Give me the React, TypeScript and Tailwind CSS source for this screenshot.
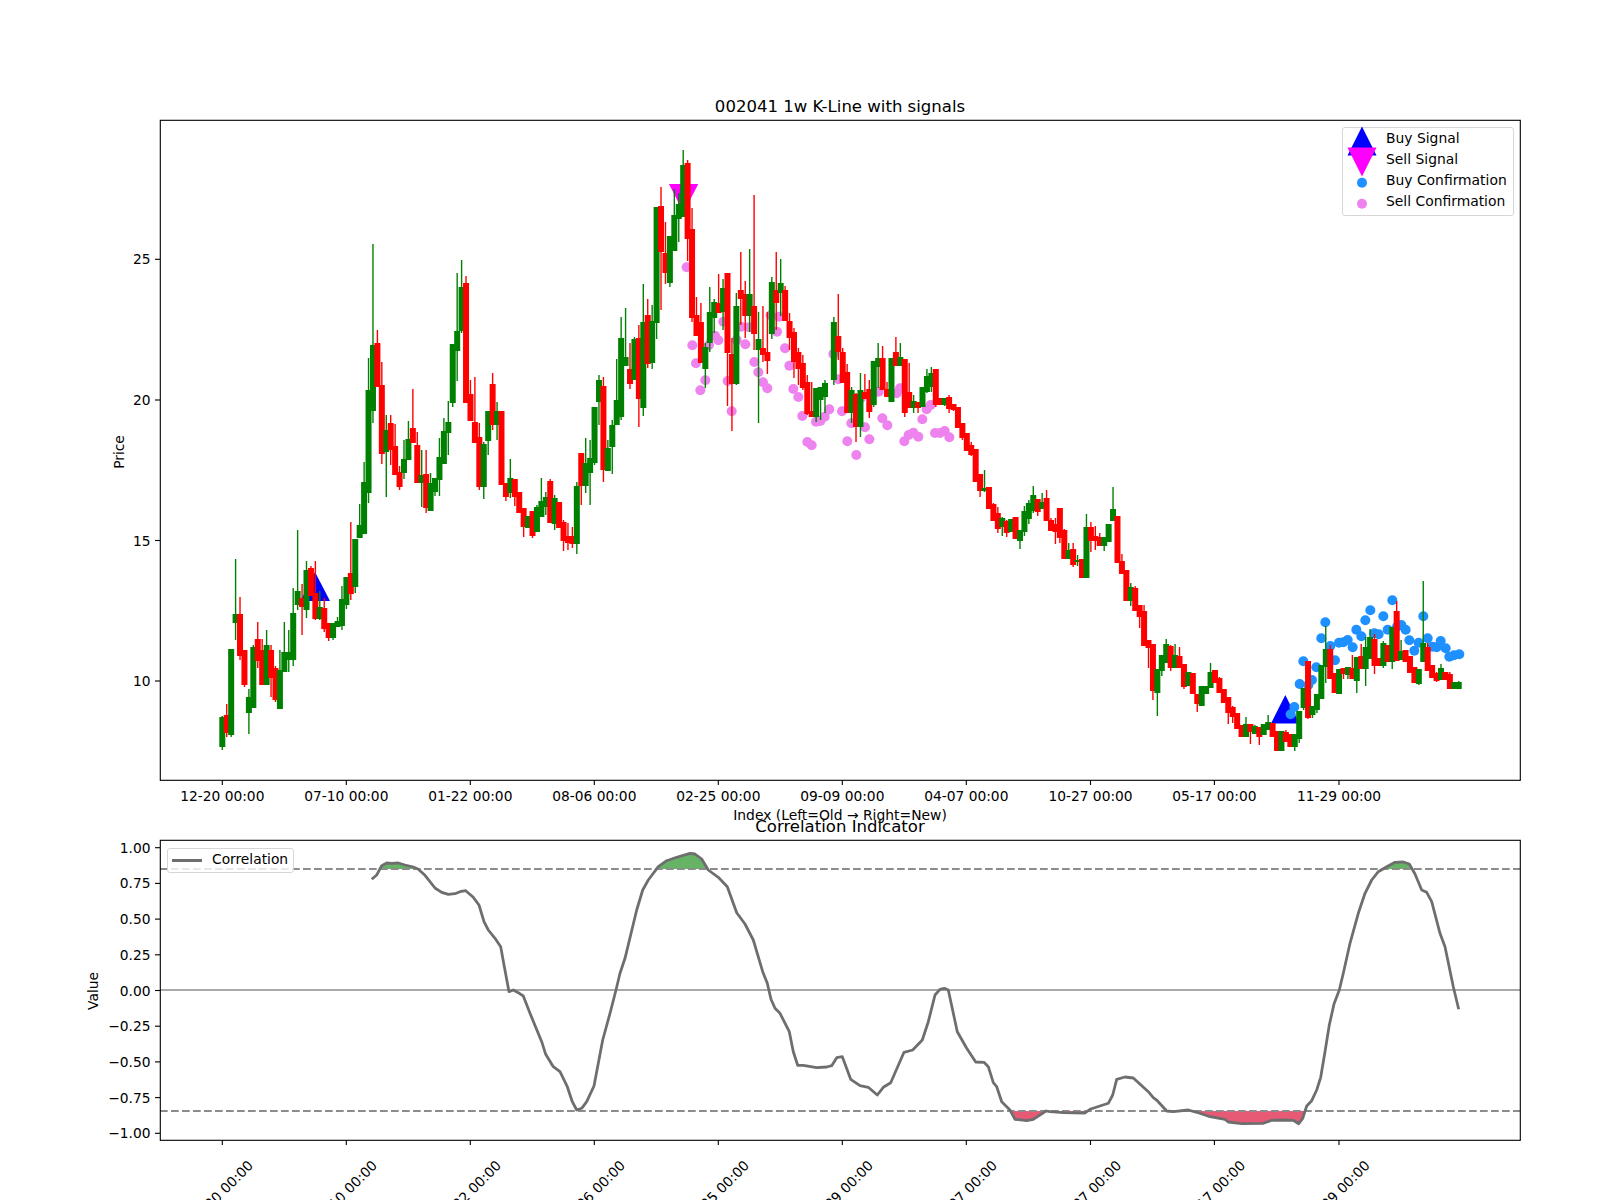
type Pt = [number, number];

// g/r, wick top, body top, body bottom, wick bottom (page px)
const candles: [string, number, number, number, number][] = [
  ["g",716,717,747,750],["r",704,715,733,737],["g",649,649,735,737],["g",559,614,623,640],["r",597,614,656,660],
  ["r",650,650,685,687],["g",689,697,713,734],["g",645,647,708,708],["r",622,639,661,668],["r",639,650,685,685],
  ["g",630,645,685,685],["r",645,650,678,697],["r",666,668,700,702],["g",650,670,709,709],["g",622,652,672,672],
  ["g",630,652,660,672],["g",588,613,660,666],["g",530,591,605,610],["r",584,598,607,635],["g",561,570,610,618],
  ["r",566,568,596,596],["r",561,593,619,620],["g",591,607,619,620],["r",598,608,629,632],["r",623,623,638,641],
  ["g",623,623,638,640],["g",617,621,627,627],["g",586,599,626,630],["g",586,577,605,609],["r",522,573,594,600],
  ["g",555,539,587,593],["g",504,525,538,538],["g",462,482,534,534],["g",358,390,493,503],["g",244,345,411,423],
  ["r",330,343,387,387],["r",362,385,454,464],["g",415,430,452,497],["r",415,423,450,465],["r",424,446,475,475],
  ["r",466,472,487,490],["g",440,459,473,479],["g",421,439,460,460],["r",389,428,443,443],["r",432,445,483,483],
  ["g",450,475,483,507],["r",450,474,508,513],["g",473,483,511,511],["g",478,478,492,496],["g",438,457,480,496],
  ["g",418,431,464,464],["g",401,422,433,455],["g",344,344,403,407],["g",273,331,351,381],["g",260,287,331,333],
  ["r",276,283,403,403],["r",380,394,421,421],["r",377,422,443,443],["r",423,437,487,490],["g",442,444,487,499],
  ["g",411,411,441,455],["r",373,384,425,430],["g",402,411,425,440],["r",411,411,485,485],["r",483,483,497,501],
  ["g",459,478,493,498],["r",479,479,497,506],["r",492,492,513,513],["r",508,508,527,537],["g",516,516,528,528],
  ["r",511,511,536,538],["g",505,507,532,532],["g",478,501,517,515],["g",492,497,507,515],["r",479,481,523,523],
  ["g",495,498,524,530],["r",502,502,528,528],["r",520,522,541,551],["r",523,536,543,550],["r",527,536,544,548],
  ["g",482,486,544,554],["r",453,453,486,505],["g",438,463,486,493],["g",440,458,473,505],["g",407,407,463,465],
  ["g",375,380,402,425],["r",377,386,470,482],["g",440,448,471,471],["g",420,425,447,474],["g",359,400,425,425],
  ["g",317,338,417,420],["g",308,357,366,366],["r",343,369,384,389],["g",337,339,380,380],["r",325,338,399,427],
  ["g",284,322,408,416],["r",299,315,364,368],["g",305,321,363,369],["g",207,207,323,339],["r",187,206,252,310],
  ["r",222,253,273,284],["g",236,236,283,287],["g",189,215,251,242],["g",193,204,219,242],["g",150,165,217,217],
  ["r",160,163,239,261],["r",208,229,318,322],["r",297,315,336,336],["r",303,322,363,363],["g",343,347,369,388],
  ["g",287,312,343,352],["g",299,302,318,333],["r",274,303,313,313],["g",279,288,312,330],["r",273,273,353,406],
  ["r",338,354,384,431],["g",293,306,384,385],["r",252,290,299,325],["r",281,294,316,338],["g",249,294,316,332],
  ["r",195,306,334,350],["g",312,339,350,423],["r",306,348,355,362],["r",312,352,361,374],["g",277,282,334,339],
  ["r",252,290,303,330],["g",259,283,293,316],["r",286,290,321,321],["r",313,321,338,350],["r",328,332,362,378],
  ["r",348,352,369,385],["r",355,363,388,390],["r",375,382,414,415],["r",382,411,417,417],["g",388,388,417,422],
  ["g",387,387,400,420],["g",380,383,397,413],["g",395,395,395,395],["g",317,322,380,385],["r",294,336,352,360],
  ["r",348,352,383,383],["r",364,372,413,413],["g",387,390,413,423],["r",393,394,427,442],["g",373,390,427,437],
  ["r",374,392,399,399],["r",380,389,412,418],["g",361,361,405,407],["g",343,358,367,388],["r",346,358,390,390],
  ["r",382,389,397,397],["g",358,358,402,402],["r",337,352,366,366],["g",343,357,366,366],["r",359,359,413,417],
  ["r",363,392,408,408],["g",395,401,408,413],["r",402,402,408,413],["g",387,387,407,407],["g",369,376,392,393],
  ["g",367,373,387,392],["r",369,369,405,407],["r",398,398,405,405],["g",398,398,405,406],["r",395,397,409,413],
  ["r",404,404,410,411],["r",407,407,428,428],["r",423,423,438,440],["r",433,433,451,451],["r",442,445,455,456],
  ["r",449,449,482,482],["r",474,474,491,497],["g",470,488,491,492],["r",487,487,509,509],["r",503,504,521,521],
  ["r",507,513,529,533],["g",517,518,527,536],["r",520,521,533,537],["g",519,519,532,532],["r",517,517,539,539],
  ["g",530,530,541,549],["g",506,511,532,536],["g",500,503,519,524],["g",486,495,511,513],["r",499,499,512,516],
  ["g",493,502,509,509],["r",490,498,521,521],["r",518,520,531,531],["r",518,524,532,544],["r",508,508,538,543],
  ["r",529,530,559,559],["g",543,550,559,559],["r",543,549,565,567],["g",555,560,562,566],["r",559,559,578,578],
  ["g",514,527,578,578],["r",522,527,541,552],["r",526,536,541,550],["r",533,537,546,546],["g",537,537,546,551],
  ["g",527,524,542,542],["g",487,509,521,521],["r",516,516,563,563],["r",554,561,574,574],["r",570,570,601,601],
  ["g",583,587,601,606],["r",586,588,611,611],["r",605,605,617,628],["r",605,611,646,646],["r",640,640,648,668],
  ["r",644,644,691,700],["g",669,669,693,716],["g",655,655,671,676],["g",639,644,663,663],["r",645,646,668,671],
  ["g",644,655,668,668],["r",647,656,668,668],["r",664,664,687,689],["g",672,672,686,686],["r",673,673,694,694],
  ["r",694,694,704,712],["g",686,686,706,706],["g",686,686,694,694],["g",663,672,688,688],["r",670,670,683,683],
  ["r",677,678,693,693],["r",689,689,703,703],["r",697,697,713,724],["r",706,707,717,723],["r",713,713,729,729],
  ["r",725,725,737,737],["g",717,724,737,737],["r",724,724,732,744],["g",725,726,734,734],["r",727,727,737,745],
  ["g",724,724,735,735],["g",715,722,730,730],["r",723,723,737,737],["r",731,731,751,751],["g",731,731,751,751],
  ["r",730,732,742,742],["r",734,734,747,747],["g",734,734,747,751],["g",711,711,739,743],["g",688,688,708,710],
  ["r",661,661,718,719],["g",706,706,715,718],["g",694,694,710,713],["g",665,665,699,699],["g",626,649,667,683],
  ["r",645,649,679,679],["r",673,673,693,693],["g",669,669,694,694],["r",668,668,674,679],["g",667,667,675,679],
  ["r",655,668,679,679],["g",657,657,681,693],["r",644,656,669,669],["g",637,647,669,686],["g",629,637,659,659],
  ["r",634,639,666,674],["r",658,658,666,666],["g",641,643,666,668],["r",645,645,662,662],["g",627,627,662,669],
  ["r",601,611,661,661],["g",640,651,660,660],["r",650,650,662,662],["r",656,656,673,673],["r",667,667,683,683],
  ["g",669,669,684,685],["g",581,643,662,662],["r",643,647,671,671],["r",665,665,678,678],["r",672,673,681,682],
  ["g",664,668,680,680],["r",672,672,680,680],["r",672,674,689,689],["g",682,682,689,689],["g",681,682,689,689],
];

const fromZoom = (ox: number, oy: number, pts: Pt[]): Pt[] =>
  pts.map(([x, y]) => [ox + x / 3, oy + y / 3]);

const pinkDots = fromZoom(640, 130, [
  [140,412],[157,646],[168,700],[181,781],[196,751],[207,645],[225,617],[235,631],[250,575],[263,753],
  [275,844],[290,630],[303,590],[316,643],[327,592],[343,696],[355,727],[369,757],[382,775],[392,556],
  [411,605],[417,560],[435,655],[448,707],[460,777],[475,801],[487,858],[502,936],[515,946],[528,875],
  [541,873],[554,860],[568,838],[580,672],[595,748],[606,844],[622,934],[634,880],[649,975],[662,805],
  [675,892],[688,928],[700,790],[716,785],[727,865],[742,886],[755,790],[770,790],[780,775],[793,934],
  [806,915],[820,908],[835,920],[847,868],[860,838],[872,825],[885,909],[900,909],[914,903],[928,922],
]);

const blueDots = fromZoom(1040, 500, [
  [752,643],[763,621],[779,552],[790,484],[805,555],[816,540],[829,502],[844,415],[856,367],[871,438],
  [885,481],[897,428],[910,427],[923,420],[938,442],[949,389],[964,409],[976,361],[991,331],[1003,400],
  [1016,403],[1030,349],[1043,389],[1057,301],[1071,380],[1084,375],[1097,389],[1108,421],[1123,452],[1136,428],
  [1150,349],[1163,415],[1177,440],[1190,442],[1202,423],[1217,445],[1228,470],[1242,466],[1258,463],
]);

const corrLine: Pt[] = [
  ...fromZoom(80, 800, [
    [875,238],[890,225],[905,197],[920,189],[935,190],[955,189],[975,195],[1000,201],[1015,208],[1035,226],
    [1065,264],[1085,277],[1105,283],[1125,281],[1140,275],[1157,272],[1180,292],[1197,315],[1212,365],[1225,390],
    [1245,415],[1262,440],[1272,495],[1287,575],[1300,570],[1315,578],[1330,588],[1350,640],[1385,725],[1397,763],
    [1420,800],
  ]),
  ...fromZoom(560, 800, [
    [0,815],[22,860],[37,905],[50,930],[65,925],[80,905],[102,858],[115,790],[128,720],[150,640],
    [168,570],[180,520],[195,475],[230,330],[248,270],[265,240],[295,200],[320,182],[350,172],[390,160],
    [405,162],[425,177],[445,210],[475,232],[502,260],[530,338],[555,372],[580,420],[608,515],[622,550],
    [633,598],[645,625],[660,640],[688,695],[700,755],[713,796],[730,796],[770,803],[800,801],[815,797],
    [830,773],[847,770],[872,838],[900,857],[925,862],[952,885],[970,862],[992,848],[1032,757],[1058,750],
    [1087,720],[1105,665],[1125,585],[1140,568],[1153,565],[1165,570],[1192,695],[1220,745],[1247,786],[1272,787],
    [1285,800],[1300,848],[1310,860],[1325,905],[1350,930],[1365,958],[1400,962],[1420,958],[1458,933],
  ]),
  ...fromZoom(1050, 800, [
    [0,935],[40,938],[105,939],[120,928],[175,910],[188,885],[200,838],[225,831],[250,834],[295,875],
    [310,893],[322,902],[350,933],[370,935],[415,930],[440,937],[480,950],[525,958],[535,966],[575,971],
    [640,970],[665,961],[700,960],[730,961],[746,971],[758,955],[770,918],[785,902],[800,870],[812,832],
    [825,755],[838,675],[852,612],[868,570],[880,520],[900,430],[925,340],[945,280],[965,240],[985,215],
    [1010,200],[1035,187],[1060,186],[1078,192],[1095,222],[1115,270],[1130,277],[1145,305],[1170,400],[1185,440],
    [1210,560],[1226,628],
  ]),
];

const xTicks = [222.3, 346.3, 470.3, 594.3, 718.3, 842.3, 966.3, 1090.5, 1214.4, 1339];
const xLabels = ["12-20 00:00", "07-10 00:00", "01-22 00:00", "08-06 00:00", "02-25 00:00", "09-09 00:00", "04-07 00:00", "10-27 00:00", "05-17 00:00", "11-29 00:00"];
const priceTicks: [string, number][] = [["25", 259.3], ["20", 400], ["15", 540.5], ["10", 681]];
const corrTicks: [string, number][] = [
  ["1.00", 847.7], ["0.75", 883.4], ["0.50", 919.1], ["0.25", 954.8], ["0.00", 990.5],
  ["−0.25", 1026.2], ["−0.50", 1061.9], ["−0.75", 1097.6], ["−1.00", 1133.3],
];

const toPoints = (pts: Pt[]) => pts.map(([x, y]) => `${x.toFixed(1)},${y.toFixed(1)}`).join(" ");
const startX = corrLine[0][0];
const endX = corrLine[corrLine.length - 1][0];

function Axes({ top, bottom }: { top: number; bottom: number }) {
  return (
    <>
      <rect x={160.3} y={top + 0.3} width={1360} height={bottom - top} fill="none" stroke="#000" strokeWidth={1.11} />
      {xTicks.map((x) => (
        <line key={x} x1={x} x2={x} y1={bottom} y2={bottom + 5} stroke="#000" strokeWidth={1.11} />
      ))}
    </>
  );
}

function PriceChart() {
  return (
    <svg viewBox="0 0 1600 810" className="block h-[810px] w-[1600px] overflow-visible text-[13.8px]">
      <text x={840} y={112} textAnchor="middle" className="text-[16.55px]">002041 1w K-Line with signals</text>
      <polygon points="315,572 300.5,601 330,601" fill="#0000ff" />
      <polygon points="1285.3,695 1271,723.5 1299.5,723.5" fill="#0000ff" />
      <polygon points="669,184 698.3,184 683.5,212.5" fill="#ff00ff" />
      {pinkDots.map(([x, y], i) => (
        <circle key={i} cx={x} cy={y} r={5} fill="#ee82ee" />
      ))}
      {blueDots.map(([x, y], i) => (
        <circle key={i} cx={x} cy={y} r={5} fill="#1e90ff" />
      ))}
      {candles.map(([c, wt, bt, bb, wb], i) => {
        const x = 222.3 + 4.4316 * i;
        const fill = c === "g" ? "#008000" : "#ff0000";
        return (
          <g key={i} fill={fill}>
            <rect x={x - 0.7} y={wt} width={1.39} height={Math.max(wb - wt, 0)} />
            <rect x={x - 3} y={bt} width={6} height={Math.max(bb - bt, 0)} />
          </g>
        );
      })}
      <Axes top={120} bottom={780} />
      {priceTicks.map(([label, y]) => (
        <g key={label}>
          <line x1={155} x2={160} y1={y} y2={y} stroke="#000" strokeWidth={1.11} />
          <text x={150.5} y={y + 5} textAnchor="end">{label}</text>
        </g>
      ))}
      {xLabels.map((label, i) => (
        <text key={label} x={xTicks[i]} y={801} textAnchor="middle">{label}</text>
      ))}
      <text x={840} y={820} textAnchor="middle" className="text-[13.89px]">Index (Left=Old → Right=New)</text>
      <text transform="translate(124,452) rotate(-90)" textAnchor="middle">Price</text>
    </svg>
  );
}

function CorrelationChart() {
  return (
    <svg viewBox="0 810 1600 390" className="block h-[390px] w-[1600px] text-[13.8px]">
      <defs>
        <clipPath id="aboveUpper">
          <rect x={160} y={840} width={1360} height={29} />
        </clipPath>
        <clipPath id="belowLower">
          <rect x={160} y={1111} width={1360} height={29} />
        </clipPath>
      </defs>
      <text x={840} y={832} textAnchor="middle" className="text-[16.55px]">Correlation Indicator</text>
      <polygon points={`${toPoints(corrLine)} ${endX},869 ${startX},869`} fill="#008000" fillOpacity={0.6} clipPath="url(#aboveUpper)" />
      <polygon points={`${toPoints(corrLine)} ${endX},1111 ${startX},1111`} fill="#dc143c" fillOpacity={0.7} clipPath="url(#belowLower)" />
      <line x1={160} x2={1520} y1={990} y2={990} stroke="#aaaaaa" strokeWidth={2.08} />
      <line x1={160} x2={1520} y1={869} y2={869} stroke="#8c8c8c" strokeWidth={2.08} strokeDasharray="7.7 3.3" />
      <line x1={160} x2={1520} y1={1111} y2={1111} stroke="#8c8c8c" strokeWidth={2.08} strokeDasharray="7.7 3.3" />
      <polyline points={toPoints(corrLine)} fill="none" stroke="#6e6e6e" strokeWidth={2.78} strokeLinejoin="round" />
      <Axes top={840} bottom={1140} />
      {corrTicks.map(([label, y]) => (
        <g key={label}>
          <line x1={155} x2={160} y1={y} y2={y} stroke="#000" strokeWidth={1.11} />
          <text x={150.5} y={y + 5} textAnchor="end">{label}</text>
        </g>
      ))}
      {xLabels.map((label, i) => (
        <text key={label} transform={`translate(${xTicks[i] + 2},1196) rotate(-45)`} textAnchor="middle">{label}</text>
      ))}
      <text transform="translate(98,991) rotate(-90)" textAnchor="middle">Value</text>
    </svg>
  );
}

function SignalLegend() {
  const rows = [
    { label: "Buy Signal", marker: <polygon points="15,-10.5 0.5,18.5 29.5,18.5" fill="#0000ff" /> },
    { label: "Sell Signal", marker: <polygon points="0.5,-10.5 29.5,-10.5 15,18.5" fill="#ff00ff" /> },
    { label: "Buy Confirmation", marker: <circle cx={15} cy={3.8} r={5} fill="#1e90ff" /> },
    { label: "Sell Confirmation", marker: <circle cx={15} cy={3.8} r={5} fill="#ee82ee" /> },
  ];
  return (
    <div className="absolute left-[1342px] top-[127px] flex h-[89px] w-[172px] flex-col rounded-[3px] border border-[#d6d6d6] bg-white/80 text-[13.89px] leading-[21px]">
      {rows.map((row) => (
        <div key={row.label} className="flex h-[21px] items-center pl-[3.5px]">
          <svg viewBox="0 0 30 4" className="h-[4px] w-[30px] shrink-0 overflow-visible">
            {row.marker}
          </svg>
          <span className="ml-[9.5px] whitespace-nowrap">{row.label}</span>
        </div>
      ))}
    </div>
  );
}

function CorrelationLegend() {
  return (
    <div className="absolute left-[167px] top-[37.5px] flex h-[25px] w-[127px] items-center rounded-[3px] border border-[#d6d6d6] bg-white/80 pl-[4px] text-[13.8px]">
      <span className="h-[3px] w-[30px] bg-[#6e6e6e]" />
      <span className="ml-[10px] whitespace-nowrap pb-[2px]">Correlation</span>
    </div>
  );
}

export default function App() {
  return (
    <div className="flex h-[1200px] w-[1600px] flex-col overflow-hidden bg-white font-['DejaVu_Sans',sans-serif] text-black">
      <div className="relative h-[810px]">
        <PriceChart />
        <SignalLegend />
      </div>
      <div className="relative h-[390px]">
        <CorrelationChart />
        <CorrelationLegend />
      </div>
    </div>
  );
}
